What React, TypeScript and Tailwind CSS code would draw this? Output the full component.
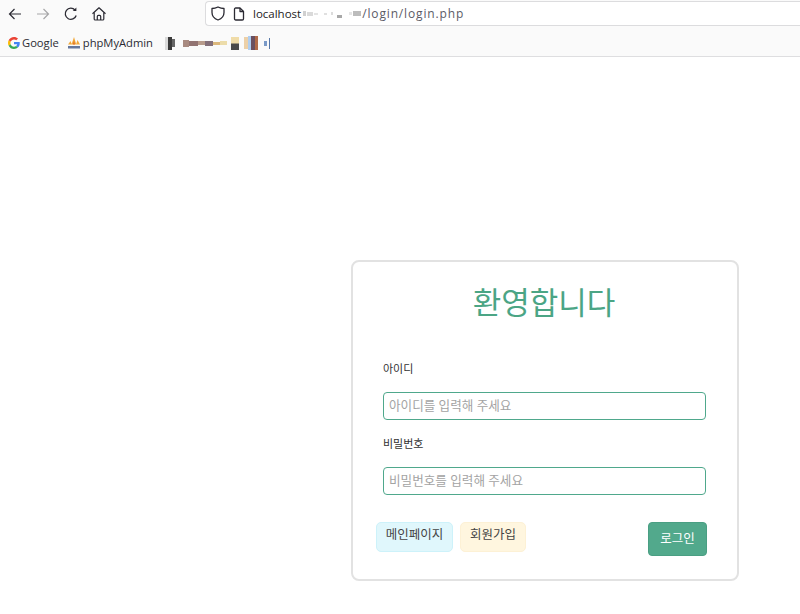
import React from "react";

const kr = "font-['Noto_Sans','Noto_Sans_CJK_KR',sans-serif]";

// 가려진(모자이크) 부분
const urlBlur = [
  "w-[3px] h-[5px] bg-[#d0d0d0]",
  "w-[6px] h-[4px] bg-[#dadada]",
  "w-[4px] h-[2px] bg-[#e4e4e4]",
  "w-[4px] h-0",
  "w-[3px] h-[2px] bg-[#e0e0e0]",
  "w-[2px] h-0",
  "w-[2px] h-[3px] bg-[#dcdcdc]",
  "w-[2px] h-0",
  "w-[5px] h-[3px] translate-y-[3px] bg-[#a8a8a8]",
  "w-[5px] h-0",
  "w-[3px] h-[3px] bg-[#e6e6e6]",
  "w-[8px] h-[5px] bg-[#bcbcbc]",
];

const bookmarkBlur = [
  "w-[3px] h-[13px] bg-[#dadada]",
  "w-[4px] h-[13px] bg-[#3a3a3a]",
  "w-[3px] h-[8px] bg-[#666666]",
  "w-[8px] h-0",
  "w-[6px] h-[7px] bg-[#a88a80]",
  "w-[9px] h-[5px] bg-[#927472]",
  "w-[7px] h-[4px] bg-[#b89c8c]",
  "w-[8px] h-[5px] bg-[#84707a]",
  "w-[7px] h-[3px] bg-[#dcb87c]",
  "w-[7px] h-[4px] bg-[#ecdcaa]",
  "w-[4px] h-0",
  "w-[8px] h-[13px] bg-[linear-gradient(#f0dca8_45%,#4a4a4a_55%)]",
  "w-[5px] h-0",
  "w-[4px] h-[12px] bg-[#ecd0a8]",
  "w-[3px] h-[14px] bg-[#b0cef0]",
  "w-[4px] h-[14px] bg-[#6a5060]",
  "w-[3px] h-[14px] bg-[#b06a48]",
  "w-[6px] h-0",
  "w-[3px] h-[5px] bg-[#7a9ac8]",
  "w-[2px] h-0",
  "w-[1px] h-[11px] bg-[#5878a8]",
];

function Back({ muted }: { muted?: boolean }) {
  return (
    <svg width="16" height="16" viewBox="0 0 16 16" fill="none" stroke={muted ? "#a6a6a8" : "#2b2a33"} strokeWidth="1.2" className={muted ? "rotate-180" : ""}>
      <path d="M14 8H2.5M7.5 3 2.5 8l5 5" />
    </svg>
  );
}

function Reload() {
  return (
    <svg width="16" height="16" viewBox="0 0 16 16" fill="none" stroke="#2b2a33" strokeWidth="1.3">
      <path d="M13.2 9.5A5.6 5.6 0 1 1 12 4" />
      <path d="M13.4 1.5v3.6H9.8z" fill="#2b2a33" stroke="none" />
    </svg>
  );
}

function Home() {
  return (
    <svg width="16" height="16" viewBox="0 0 16 16" fill="none" stroke="#2b2a33" strokeWidth="1.2" strokeLinejoin="round">
      <path d="M1.5 7.8 8 1.8l6.5 6" />
      <path d="M3.2 6.5v6.4c0 .7.4 1.1 1.1 1.1h7.400c.7 0 1.100-.4 1.100-1.100V6.500" />
      <path d="M6.300 14v-3.600c0-.6.4-1 1-1h1.400c.6 0 1 .4 1 1V14" />
    </svg>
  );
}

function Shield() {
  return (
    <svg width="14" height="15" viewBox="0 0 14 15" fill="none" stroke="#2b2a33" strokeWidth="1.3" strokeLinejoin="round">
      <path d="M7 1c2 1 3.800 1.500 6 1.500V6.500C13 10 10.500 12.800 7 14 3.500 12.800 1 10 1 6.500V2.500C3.200 2.500 5 2 7 1z" />
    </svg>
  );
}

function PageIcon() {
  return (
    <svg width="12" height="14" viewBox="0 0 12 14" fill="none" stroke="#2b2a33" strokeWidth="1.3" strokeLinejoin="round">
      <path d="M1.500 2.200c0-.7.5-1.200 1.200-1.200H7l3.500 3.500v7.300c0 .7-.5 1.200-1.200 1.200H2.700c-.7 0-1.200-.5-1.200-1.200z" />
      <path d="M7 1v3.500h3.500" />
    </svg>
  );
}

function GoogleG() {
  return (
    <svg width="12" height="12" viewBox="0 0 48 48">
      <path fill="#EA4335" d="M24 9.500c3.500 0 6.700 1.200 9.200 3.600l6.900-6.900C35.900 2.400 30.500 0 24 0 14.600 0 6.500 5.400 2.600 13.200l8 6.200C12.500 13.700 17.800 9.500 24 9.500z" />
      <path fill="#4285F4" d="M47 24.500c0-1.600-.1-3.100-.4-4.500H24v9h12.900c-.6 3-2.200 5.500-4.800 7.200l7.700 6C44.300 37.500 47 31.600 47 24.500z" />
      <path fill="#FBBC05" d="M10.600 28.600c-.5-1.400-.8-3-.8-4.600s.3-3.200.8-4.600l-8-6.200C.9 16.500 0 20.100 0 24s.9 7.500 2.600 10.800z" />
      <path fill="#34A853" d="M24 48c6.500 0 11.900-2.100 15.800-5.800l-7.700-6c-2.100 1.400-4.900 2.300-8.100 2.300-6.200 0-11.500-4.200-13.400-9.900l-8 6.200C6.500 42.600 14.600 48 24 48z" />
    </svg>
  );
}

function PmaLogo() {
  return (
    <svg width="14" height="14" viewBox="0 0 14 14">
      <path d="M1 8.500 3.500 5 5 8.500zM4.500 8.500 7 1l2.300 7.500zM9 8.500 10.500 4 13 8.500z" fill="#f2a93a" />
      <path d="M5.800 8.500 7 4.500l1 4z" fill="#e2702a" />
      <path d="M1 10h12v2.500H1z" fill="#66779c" />
    </svg>
  );
}

function Field({ label, placeholder }: { label: string; placeholder: string }) {
  return (
    <div className="flex flex-col">
      <label className="text-[11px] leading-[18px] text-[#333333]">{label}</label>
      <input
        readOnly
        placeholder={placeholder}
        className="mt-[14px] w-[323px] h-[28px] rounded-[4px] border border-[#4fa88c] bg-white pl-[5px] pr-[4px] pb-[2px] text-[12.600px] text-[#333333] outline-none placeholder:text-[#a3a3a3]"
      />
    </div>
  );
}

export default function App() {
  return (
    <div className={`w-full h-[614px] bg-white overflow-hidden ${kr}`}>
      {/* 브라우저 상단 */}
      <div className="h-[57px] bg-[#fafafa] border-b border-[#dedee0] flex flex-col">
        <div className="h-[27px] flex items-center">
          <div className="flex items-center w-[205px] pl-[7px] gap-[12px]">
            <Back />
            <Back muted />
            <Reload />
            <Home />
          </div>
          <div className="flex-1 self-start mt-[1px] h-[25px] bg-white border border-[#dcdcde] border-r-0 rounded-l-[4px] flex items-center pl-[5px]">
            <Shield />
            <span className="ml-[8px] flex"><PageIcon /></span>
            <span className="ml-[8px] text-[11.500px] text-[#1d1b22] font-['Open_Sans',sans-serif]">localhost</span>
            <span className="flex items-center gap-[1px] ml-[2px] mr-[1px] h-[10px]">
              {urlBlur.map((b, i) => (
                <span key={i} className={b} />
              ))}
            </span>
            <span className="text-[12px] tracking-[0.85px] text-[#5b5b66] font-['Open_Sans',sans-serif]">/login/login.php</span>
          </div>
        </div>
        <div className="flex-1 flex items-center pl-[8px] pt-[3px] text-[11.200px] text-[#2b2a33] font-['Open_Sans',sans-serif]">
          <GoogleG />
          <span className="ml-[2px]">Google</span>
          <span className="ml-[8px] flex"><PmaLogo /></span>
          <span className="ml-[2px]">phpMyAdmin</span>
          <span className="ml-[12px] flex items-center">
            {bookmarkBlur.map((b, i) => (
              <span key={i} className={b} />
            ))}
          </span>
        </div>
      </div>

      {/* 로그인 카드 */}
      <div className="flex justify-end pr-[61px] pt-[203px]">
        <form className="w-[388px] h-[321px] rounded-[8px] border-2 border-[#e2e2e2] bg-white flex flex-col pl-[30px] pr-[30px]">
          <h1 className="text-center text-[31px] leading-[44px] mt-[18px] pr-[2px] text-[#4ba585] font-normal">환영합니다</h1>
          <div className="mt-[36px]">
            <Field label="아이디" placeholder="아이디를 입력해 주세요" />
          </div>
          <div className="mt-[15px]">
            <Field label="비밀번호" placeholder="비밀번호를 입력해 주세요" />
          </div>
          <div className="mt-[27px] flex items-start -ml-[7px]">
            <button type="button" className="h-[30px] w-[77px] pb-[3px] rounded-[5px] border border-[#cdf2fa] bg-[#e0f7fc] text-[12.500px] text-[#444444]">
              메인페이지
            </button>
            <button type="button" className="ml-[7px] h-[30px] w-[66px] pb-[3px] rounded-[5px] border border-[#fdf1d5] bg-[#fff6df] text-[12.500px] text-[#444444]">
              회원가입
            </button>
            <button type="button" className="ml-auto h-[34px] w-[59px] rounded-[4px] border border-[#4a9f83] bg-[#52a98c] text-[12.500px] text-white">
              로그인
            </button>
          </div>
        </form>
      </div>
    </div>
  );
}
